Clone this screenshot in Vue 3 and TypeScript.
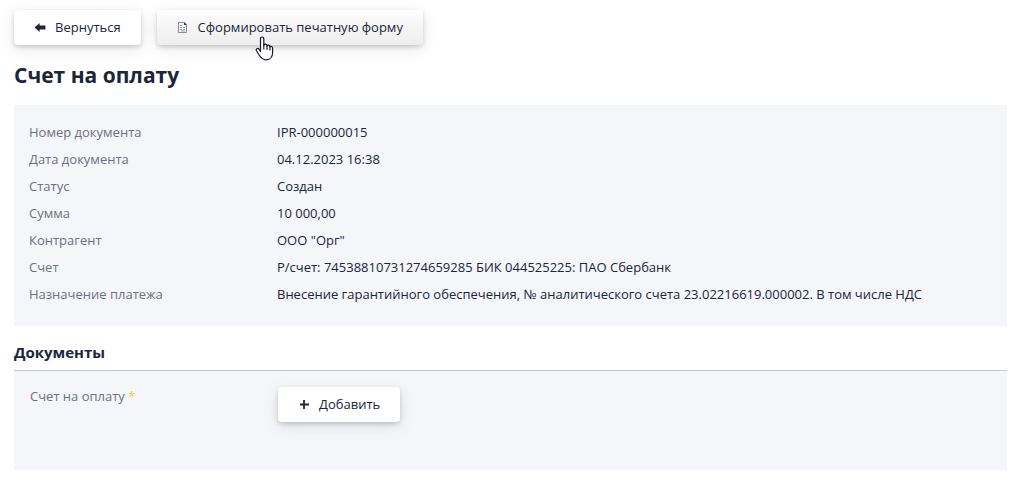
<script setup lang="ts">
interface Field {
  label: string
  value: string
}

const fields: Field[] = [
  { label: 'Номер документа', value: 'IPR-000000015' },
  { label: 'Дата документа', value: '04.12.2023 16:38' },
  { label: 'Статус', value: 'Создан' },
  { label: 'Сумма', value: '10 000,00' },
  { label: 'Контрагент', value: 'ООО "Орг"' },
  { label: 'Счет', value: 'Р/счет: 74538810731274659285 БИК 044525225: ПАО Сбербанк' },
  {
    label: 'Назначение платежа',
    value: 'Внесение гарантийного обеспечения, № аналитического счета 23.02216619.000002. В том числе НДС',
  },
]
</script>

<template>
  <main class="page">
    <div class="toolbar">
      <button type="button" class="btn">
        <svg class="icon" viewBox="0 0 12 12" aria-hidden="true">
          <path d="M0.6 5.5 5.6 0.9V3.6H11.4V7.4H5.6V10.1Z" fill="#1b253b" />
        </svg>
        <span>Вернуться</span>
      </button>
      <button type="button" class="btn hovered">
        <svg class="icon" viewBox="0 0 12 12" aria-hidden="true">
          <path d="M1.5 0.5H7.5L9.5 2.5V10.5H1.5Z" fill="#f4f6f8" stroke="#868b94" />
          <path d="M7 0 10 3H7Z" fill="#39414e" />
          <path d="M3 3.5H5M3 5.5H5M6 5.5H8M3 7.5H5M6 7.5H8M4 9H8" stroke="#8fa3ba" />
        </svg>
        <span>Сформировать печатную форму</span>
        <svg class="pointer" viewBox="0 0 19 25" aria-hidden="true">
          <path
            d="M5.5 15.5V2.8C5.5 .4 8.8 .4 8.8 2.8V9C9.4 7.6 11.9 7.9 12 9.7C12.8 8.6 14.9 9 15 10.8C15.8 9.9 17.6 10.5 17.6 12.2V16.5C17.6 20.5 15.3 23.8 11.2 23.8C7.6 23.8 5.8 21.8 4.3 19.3L1.5 14.8C.5 12.9 2.7 11.7 4 13.2Z"
            fill="#fff"
            stroke="#17172b"
            stroke-width="1.2"
            stroke-linejoin="round"
          />
          <path d="M8.8 8.5V13M12 9.5V13.5M15 10.8V14" fill="none" stroke="#17172b" stroke-width="1.2" stroke-linecap="round" />
        </svg>
      </button>
    </div>

    <h1 class="title">Счет на оплату</h1>

    <dl class="panel details">
      <div v-for="field in fields" :key="field.label" class="row">
        <dt class="label">{{ field.label }}</dt>
        <dd class="value">{{ field.value }}</dd>
      </div>
    </dl>

    <h2 class="subtitle">Документы</h2>
    <section class="panel documents">
      <div id="invoice-label" class="label">Счет на оплату <span class="required">*</span></div>
      <button id="invoice-add" type="button" class="btn" aria-labelledby="invoice-label invoice-add">
        <svg class="icon" viewBox="0 0 12 12" aria-hidden="true">
          <path d="M6 1V10M2 5.5H11" stroke="#1b253b" stroke-width="1.8" />
        </svg>
        <span>Добавить</span>
      </button>
    </section>
  </main>
</template>

<style>
body {
  margin: 0;
  background: #fff;
}
</style>

<style scoped>
.page {
  padding: 10px 7px 11px 14px;
  font-family: 'Open Sans', 'Noto Sans', sans-serif;
  font-size: 13px;
  line-height: 27px;
  color: #1b253b;
}

.toolbar {
  display: flex;
  gap: 16px;
}

.btn {
  display: flex;
  align-items: center;
  gap: 9px;
  height: 35px;
  padding: 0 20px;
  border: 0;
  border-radius: 4px;
  background: #fff;
  box-shadow: 0 2px 4px rgba(0, 0, 0, 0.16), 0 4px 16px rgba(0, 0, 0, 0.1);
  color: inherit;
  font: inherit;
  white-space: nowrap;
  cursor: pointer;
}

.hovered {
  position: relative;
  background: linear-gradient(#fefefe, #ededed);
}

.icon {
  flex: none;
  width: 12px;
  height: 12px;
}

.pointer {
  position: absolute;
  top: 26px;
  left: 98px;
  width: 19px;
  height: 25px;
}

.title {
  margin: 15px 0;
  font-size: 21px;
  line-height: 30px;
  font-weight: 700;
}

.panel {
  margin: 0;
  background: #f4f6fa;
}

.details {
  padding: 14px 15px 18px;
}

.row {
  display: flex;
}

.label {
  flex: 0 0 248px;
  color: #6d7080;
}

.value {
  flex: 1;
  margin: 0;
}

.subtitle {
  margin: 13px 0 0;
  padding-bottom: 4px;
  border-bottom: 1px solid #c5c7d6;
  font-size: 15px;
  line-height: 27px;
  font-weight: 700;
}

.documents {
  display: flex;
  align-items: flex-start;
  padding: 16px 16px 48px;
}

.documents .label {
  line-height: 18px;
}

.required {
  color: #ffc62e;
}
</style>
